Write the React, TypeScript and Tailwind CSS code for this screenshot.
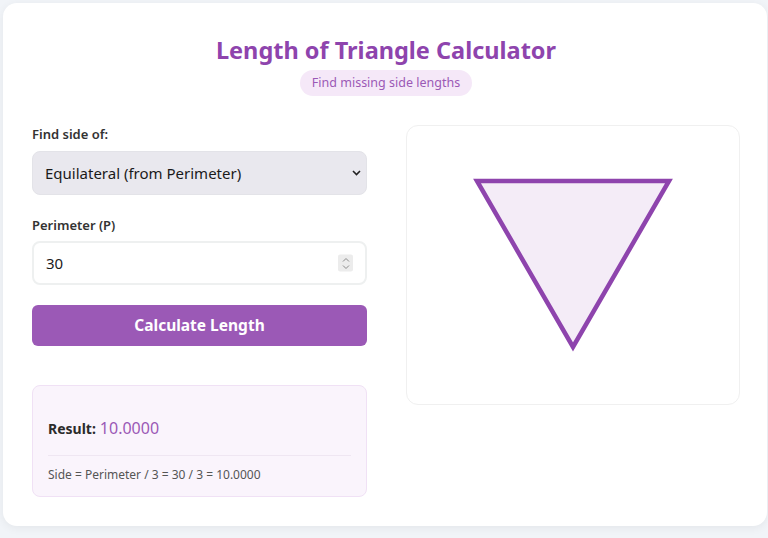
import { useState } from 'react';

const FONT = "font-['Noto_Sans','Open_Sans',sans-serif]";

function Triangle() {
  return (
    <svg width="204" height="180" viewBox="0 0 204 180" className="block">
      <polygon
        points="6,6 198,6 102,172"
        fill="#f4ecf7"
        stroke="#8e44ad"
        strokeWidth="4.5"
        strokeLinejoin="miter"
      />
    </svg>
  );
}

function SpinIcon() {
  return (
    <span className="pointer-events-none absolute right-[14px] top-1/2 flex h-[17px] w-[15px] -translate-y-1/2 flex-col items-center justify-center gap-[2px] rounded-[2px] bg-[#ececec]">
      <svg width="8" height="5" viewBox="0 0 8 5">
        <path d="M1 4 L4 1 L7 4" fill="none" stroke="#8a8a8a" strokeWidth="1" />
      </svg>
      <svg width="8" height="5" viewBox="0 0 8 5">
        <path d="M1 1 L4 4 L7 1" fill="none" stroke="#8a8a8a" strokeWidth="1" />
      </svg>
    </span>
  );
}

export default function App() {
  const [mode, setMode] = useState('equilateral');
  const [perimeter, setPerimeter] = useState('30');
  const side = (parseFloat(perimeter) || 0) / 3;

  return (
    <div className={`min-h-[538px] bg-[#f1f4f8] pt-[3px] pl-[3px] ${FONT}`}>
      <div className="w-[764px] rounded-[14px] bg-white pt-[32px] pb-[29px] pl-[29px] pr-[27px] shadow-[0_2px_10px_rgba(0,0,0,0.06)]">
        <div className="flex flex-col items-center">
          <h1 className="text-[23.5px] font-bold leading-[30px] text-[#8e44ad]">
            Length of Triangle Calculator
          </h1>
          <span className="mt-[5px] rounded-full bg-[#f5e8f8] px-[12px] py-[4px] text-[12.5px] leading-[18px] text-[#9b59b6]">
            Find missing side lengths
          </span>
        </div>

        <div className="mt-[29px] grid grid-cols-[335px_334px] gap-x-[39px]">
          <div className="flex flex-col">
            <label className="text-[13px] font-semibold leading-[18px] text-[#333]">Find side of:</label>
            <div className="relative mt-[8px]">
              <select
                value={mode}
                onChange={(e) => setMode(e.target.value)}
                className="h-[44px] w-full appearance-none rounded-[8px] border border-[#e3e3e8] bg-[#e9e8ee] pl-[12px] text-[15px] text-[#1a1a1a] outline-none"
              >
                <option value="equilateral">Equilateral (from Perimeter)</option>
                <option value="isosceles">Isosceles</option>
                <option value="right">Right Triangle</option>
              </select>
              <svg
                width="9"
                height="6"
                viewBox="0 0 9 6"
                className="pointer-events-none absolute right-[6px] top-1/2 -translate-y-1/2"
              >
                <path d="M1 1 L4.5 4.5 L8 1" fill="none" stroke="#222" strokeWidth="1.6" />
              </svg>
            </div>

            <label className="mt-[21px] text-[13px] font-semibold leading-[18px] text-[#333]">Perimeter (P)</label>
            <div className="relative mt-[7px]">
              <input
                value={perimeter}
                onChange={(e) => setPerimeter(e.target.value)}
                className="h-[44px] w-full rounded-[8px] border-2 border-[#eef0f0] bg-white pl-[12px] text-[15px] text-[#1a1a1a] outline-none"
              />
              <SpinIcon />
            </div>

            <button className="mt-[20px] h-[41px] rounded-[6px] bg-[#9b59b6] text-[15.5px] font-bold text-white">
              Calculate Length
            </button>

            <div className="mt-[39px] rounded-[8px] border border-[#f0e1f5] bg-[#faf4fc] px-[15px] pt-[31px] pb-[12px]">
              <div className="flex items-baseline gap-[4px] leading-[22px]">
                <span className="text-[14px] font-bold text-[#2b2b2b]">Result:</span>
                <span className="text-[16px] text-[#9b59b6]">{side.toFixed(4)}</span>
              </div>
              <div className="mt-[15px] border-t border-[#efe6f2] pt-[10px] text-[12px] leading-[18px] text-[#555]">
                Side = Perimeter / 3 = {perimeter} / 3 = {side.toFixed(4)}
              </div>
            </div>
          </div>

          <div className="flex h-[280px] items-center justify-center rounded-[12px] border border-[#f0f0f0] bg-white">
            <Triangle />
          </div>
        </div>
      </div>
    </div>
  );
}
